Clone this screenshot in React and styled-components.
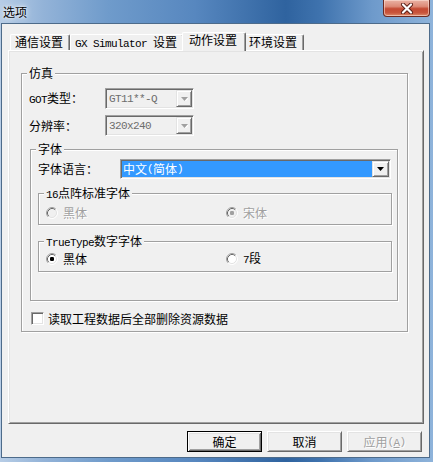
import React from 'react';
import styled, { createGlobalStyle, css } from 'styled-components';

const FONT = `"Noto Sans CJK SC", "Noto Sans CJK JP", sans-serif`;

const Global = createGlobalStyle`
  html, body { margin: 0; padding: 0; }
  body {
    width: 433px; height: 462px; overflow: hidden;
    background: #6f9bc9;
    font-family: ${FONT};
  }
`;

const Window = styled.div`
  width: 433px;
  height: 462px;
  display: flex;
  flex-direction: column;
  background: linear-gradient(90deg, #b7cde6 0%, #93b3d8 10%, #6f9bcb 25%, #5787bf 45%, #2f639f 66%, #3f73ae 74%, #6e9acb 86%, #8eb3da 100%);
`;

const TitleBar = styled.div`
  height: 23px;
  flex: none;
  display: flex;
  align-items: flex-start;
`;

const Title = styled.div`
  margin: 6px 0 0 3px;
  font: 12px/12px ${FONT};
  color: #000;
  text-shadow: 0 0 3px #fff, 0 0 6px rgba(255, 255, 255, 0.9);
`;

const CloseBtn = styled.div`
  margin-left: auto;
  margin-right: 3px;
  width: 47px;
  height: 17px;
  box-sizing: border-box;
  border: 1px solid #6b2a22;
  border-top: none;
  border-radius: 0 0 4px 4px;
  background: linear-gradient(#eab3a5 0%, #dd8a77 40%, #c44a33 55%, #c9553c 80%, #dd8c6c 100%);
  box-shadow: inset 0 0 0 1px rgba(255, 230, 220, 0.55);
  display: flex;
  align-items: center;
  justify-content: center;
`;

const Client = styled.div`
  margin: 0 3px 4px 1px;
  flex: 1;
  background: #f0f0f0;
  border: 1px solid #4d6b8a;
  display: flex;
  flex-direction: column;
`;

const TabRow = styled.div`
  margin: 8px 0 0 8px;
  height: 18px;
  display: flex;
  align-items: flex-end;
  flex: none;
`;

const Tab = styled.div`
  position: relative;
  box-sizing: border-box;
  height: 16px;
  padding: 1px 6px 0 4px;
  border: 1px solid #fff;
  border-right-color: #696969;
  border-bottom: none;
  border-radius: 2px 2px 0 0;
  box-shadow: inset -1px 0 0 #a0a0a0;
  background: #f0f0f0;
  z-index: 1;
  font: 12px/12px ${FONT};
  color: #000;
  white-space: nowrap;
  ${(p) =>
    p.$active &&
    css`
      height: 19px;
      padding: 1px 8px 0 6px;
      margin: 0 -2px -1px -2px;
      z-index: 2;
    `}
`;

const Asc = styled.span`
  font-family: "Liberation Mono", "DejaVu Sans Mono", monospace;
  font-size: 11px;
  letter-spacing: -0.6px;
`;

const Panel = styled.div`
  margin-left: 6px;
  width: 416px;
  height: 374px;
  box-sizing: border-box;
  border: 1px solid;
  border-color: #fff #696969 #696969 #fff;
  box-shadow: inset 1px 1px 0 #e3e3e3, inset -1px -1px 0 #a0a0a0;
  display: flex;
  flex-direction: column;
  flex: none;
`;

const Group = styled.div`
  box-sizing: border-box;
  width: ${(p) => p.$w}px;
  height: ${(p) => p.$h}px;
  margin: ${(p) => p.$mt}px 0 0 ${(p) => p.$ml}px;
  border: 1px solid #a0a0a0;
  box-shadow: inset 1px 1px 0 #fff, 1px 1px 0 #fff;
  display: flex;
  flex-direction: column;
  flex: none;
`;

const Legend = styled.div`
  align-self: flex-start;
  margin: -7px 0 0 5px;
  padding: 0 2px;
  background: #f0f0f0;
  font: 12px/12px ${FONT};
  color: #000;
  white-space: nowrap;
`;

const FieldRow = styled.div`
  display: flex;
  align-items: center;
  height: ${(p) => p.$h}px;
  margin-top: ${(p) => p.$mt}px;
  padding-left: 7px;
  flex: none;
`;

const Label = styled.div`
  width: ${(p) => p.$w}px;
  flex: none;
  font: 12px/12px ${FONT};
  color: #000;
  white-space: nowrap;
`;

const Combo = styled.div`
  box-sizing: border-box;
  width: ${(p) => p.$w}px;
  height: ${(p) => p.$h}px;
  border: 1px solid;
  border-color: #a0a0a0 #fff #fff #a0a0a0;
  box-shadow: inset 1px 1px 0 #696969, inset -1px -1px 0 #e3e3e3;
  padding: 1px;
  background: ${(p) => (p.$disabled ? '#f0f0f0' : '#fff')};
  display: flex;
  align-items: stretch;
  flex: none;
`;

const ComboText = styled.div`
  flex: 1;
  display: flex;
  align-items: center;
  padding-left: ${(p) => (p.$selected ? 1 : 2)}px;
  font: 12px/12px ${FONT};
  color: ${(p) => (p.$disabled ? '#6d6d6d' : '#000')};
  white-space: nowrap;
  ${(p) =>
    p.$selected &&
    css`
      background: #3399ff;
      color: #fff;
    `}
`;

const DropBtn = styled.div`
  box-sizing: border-box;
  width: ${(p) => p.$w}px;
  flex: none;
  background: #f0f0f0;
  border: 1px solid;
  border-color: #e3e3e3 #696969 #696969 #e3e3e3;
  box-shadow: inset 1px 1px 0 #fff, inset -1px -1px 0 #a0a0a0;
  display: flex;
  align-items: center;
  justify-content: center;
`;

const RadioRow = styled.div`
  display: flex;
  align-items: center;
  height: 12px;
  margin-top: ${(p) => p.$mt}px;
  padding-left: 7px;
  flex: none;
`;

const Option = styled.div`
  display: flex;
  align-items: center;
  gap: 5px;
  width: ${(p) => (p.$w ? `${p.$w}px` : 'auto')};
  flex: none;
  font: 12px/12px ${FONT};
  color: ${(p) => (p.$disabled ? '#a0a0a0' : '#000')};
  text-shadow: ${(p) => (p.$disabled ? '1px 1px 0 #fff' : 'none')};
  white-space: nowrap;
`;

const CheckRow = styled.div`
  display: flex;
  align-items: center;
  gap: 4px;
  margin: 11px 0 0 9px;
  font: 12px/12px ${FONT};
  color: #000;
  white-space: nowrap;
`;

const CheckBox = styled.div`
  box-sizing: border-box;
  width: 13px;
  height: 13px;
  border: 1px solid;
  border-color: #a0a0a0 #fff #fff #a0a0a0;
  box-shadow: inset 1px 1px 0 #696969, inset -1px -1px 0 #e3e3e3;
  background: #fff;
  flex: none;
`;

const ButtonRow = styled.div`
  display: flex;
  justify-content: flex-end;
  gap: 5px;
  margin-top: 7px;
  padding-right: 7px;
  flex: none;
`;

const Button = styled.div`
  box-sizing: border-box;
  width: 75px;
  height: 21px;
  display: flex;
  align-items: center;
  justify-content: center;
  background: #f0f0f0;
  border: 1px solid;
  border-color: #fff #696969 #696969 #fff;
  box-shadow: inset 1px 1px 0 #e3e3e3, inset -1px -1px 0 #a0a0a0;
  font: 12px/12px ${FONT};
  color: #000;
  white-space: nowrap;
  ${(p) =>
    p.$default &&
    css`
      border-color: #000;
      box-shadow: inset 1px 1px 0 #fff, inset -1px -1px 0 #696969, inset 2px 2px 0 #e3e3e3,
        inset -2px -2px 0 #a0a0a0;
    `}
  ${(p) =>
    p.$disabled &&
    css`
      color: #a0a0a0;
      text-shadow: 1px 1px 0 #fff;
    `}
`;

const Underline = styled.span`
  text-decoration: underline;
`;

function Radio({ checked, disabled }) {
  return (
    <svg width="12" height="12" viewBox="0 0 12 12" style={{ flex: 'none' }}>
      <circle cx="6" cy="6" r="5" fill={disabled ? '#f0f0f0' : '#fff'} />
      <path d="M2.11 9.89 A5.5 5.5 0 0 1 9.89 2.11" fill="none" stroke="#a0a0a0" strokeWidth="1" />
      <path d="M9.89 2.11 A5.5 5.5 0 0 1 2.11 9.89" fill="none" stroke="#fff" strokeWidth="1" />
      <path d="M2.82 9.18 A4.5 4.5 0 0 1 9.18 2.82" fill="none" stroke="#696969" strokeWidth="1" />
      <path d="M9.18 2.82 A4.5 4.5 0 0 1 2.82 9.18" fill="none" stroke="#e3e3e3" strokeWidth="1" />
      {checked && <rect x="4" y="4" width="4" height="4" rx="1.2" fill={disabled ? '#a0a0a0' : '#000'} />}
    </svg>
  );
}

function Arrow({ disabled }) {
  return (
    <svg width="7" height="4" viewBox="0 0 7 4">
      {disabled && <path d="M1 1 H8 L4.5 4.5 Z" fill="#fff" />}
      <path d="M0 0 H7 L3.5 4 Z" fill={disabled ? '#a0a0a0' : '#000'} />
    </svg>
  );
}

function CloseGlyph() {
  return (
    <svg width="14" height="11" viewBox="0 0 14 11">
      <path
        d="M3 1.5 L11 9.5 M11 1.5 L3 9.5"
        stroke="#5a1e16"
        strokeWidth="4"
        strokeLinecap="round"
        fill="none"
      />
      <path d="M3 1.5 L11 9.5 M11 1.5 L3 9.5" stroke="#fff" strokeWidth="2.2" strokeLinecap="round" fill="none" />
    </svg>
  );
}

export default function App() {
  return (
    <>
      <Global />
      <Window>
        <TitleBar>
          <Title>选项</Title>
          <CloseBtn>
            <CloseGlyph />
          </CloseBtn>
        </TitleBar>
        <Client>
          <TabRow>
            <Tab>通信设置</Tab>
            <Tab>
              <Asc>GX Simulator </Asc>设置
            </Tab>
            <Tab $active>动作设置</Tab>
            <Tab>环境设置</Tab>
          </TabRow>
          <Panel>
            <Group $w={387} $h={259} $mt={22} $ml={12}>
              <Legend>仿真</Legend>
              <FieldRow $h={21} $mt={9}>
                <Label $w={76}>
                  <Asc>GOT</Asc>类型：
                </Label>
                <Combo $w={89} $h={21} $disabled>
                  <ComboText $disabled>
                    <Asc>GT11**-Q</Asc>
                  </ComboText>
                  <DropBtn $w={16}>
                    <Arrow disabled />
                  </DropBtn>
                </Combo>
              </FieldRow>
              <FieldRow $h={21} $mt={6}>
                <Label $w={76}>分辨率：</Label>
                <Combo $w={89} $h={21} $disabled>
                  <ComboText $disabled>
                    <Asc>320x240</Asc>
                  </ComboText>
                  <DropBtn $w={16}>
                    <Arrow disabled />
                  </DropBtn>
                </Combo>
              </FieldRow>

              <Group $w={368} $h={152} $mt={13} $ml={8}>
                <Legend>字体</Legend>
                <FieldRow $h={20} $mt={4}>
                  <Label $w={82}>字体语言：</Label>
                  <Combo $w={271} $h={20}>
                    <ComboText $selected>
                      中文<Asc>(</Asc>简体<Asc>)</Asc>
                    </ComboText>
                    <DropBtn $w={17}>
                      <Arrow />
                    </DropBtn>
                  </Combo>
                </FieldRow>

                <Group $w={354} $h={32} $mt={14} $ml={7}>
                  <Legend>
                    <Asc>16</Asc>点阵标准字体
                  </Legend>
                  <RadioRow $mt={6}>
                    <Option $w={180} $disabled>
                      <Radio disabled />
                      黑体
                    </Option>
                    <Option $disabled>
                      <Radio disabled checked />
                      宋体
                    </Option>
                  </RadioRow>
                </Group>

                <Group $w={354} $h={31} $mt={16} $ml={7}>
                  <Legend>
                    <Asc>TrueType</Asc>数字字体
                  </Legend>
                  <RadioRow $mt={4}>
                    <Option $w={180}>
                      <Radio checked />
                      黑体
                    </Option>
                    <Option>
                      <Radio />
                      <span>
                        <Asc>7</Asc>段
                      </span>
                    </Option>
                  </RadioRow>
                </Group>
              </Group>

              <CheckRow>
                <CheckBox />
                读取工程数据后全部删除资源数据
              </CheckRow>
            </Group>
          </Panel>
          <ButtonRow>
            <Button $default>确定</Button>
            <Button>取消</Button>
            <Button $disabled>
              应用<Asc>(</Asc>
              <Underline>
                <Asc>A</Asc>
              </Underline>
              <Asc>)</Asc>
            </Button>
          </ButtonRow>
        </Client>
      </Window>
    </>
  );
}
